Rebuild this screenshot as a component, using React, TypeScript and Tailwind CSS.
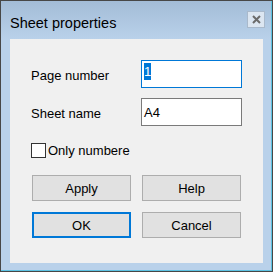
const font = { fontFamily: '"Liberation Sans", Arial, sans-serif' };

function Button({ label, primary }: { label: string; primary?: boolean }) {
  return (
    <div
      className={
        "w-[99px] h-[26px] flex items-center justify-center bg-[#e1e1e1] text-[13px] leading-[15px] text-black " +
        (primary ? "border-2 border-[#0078d7]" : "border border-[#adadad]")
      }
    >
      {label}
    </div>
  );
}

export default function App() {
  return (
    <div className="w-[274px] h-[273px] bg-white" style={font}>
      <div className="w-[273px] h-[272px] border border-[#474747] flex">
        <div className="flex-1 flex flex-col border-r border-b border-[#5cc2e2] bg-[#b9d1ea]">
          {/* title bar */}
          <div className="h-[38px] flex items-start bg-gradient-to-b from-[#a3bcd7] to-[#b9d1ea]">
            <span className="ml-[9px] mt-[14px] text-[14.5px] leading-[17px] text-black">
              Sheet properties
            </span>
            <div className="ml-auto mr-[6px] mt-[10px] w-[18px] h-[17px] flex items-center justify-center bg-[#dce6f1] border border-[#a9b9cb]">
              <svg width="9" height="9" viewBox="0 0 9 9">
                <path d="M1 1 L8 8 M8 1 L1 8" stroke="#6b6b6b" strokeWidth="2" />
              </svg>
            </div>
          </div>

          {/* client area */}
          <div className="ml-[9px] w-[253px] h-[224px] bg-[#f0f0f0] pl-[21px] pt-[21px] flex flex-col text-[13px] leading-[15px] text-black">
            <div className="flex items-center">
              <span className="w-[110px] pt-[2px]">Page number</span>
              <div className="w-[101px] h-[28px] border border-[#0078d7] bg-white pl-[2px] pt-[2px]">
                <span className="inline-block h-[17px] leading-[17px] px-[0px] bg-[#0078d7] text-white">1</span>
              </div>
            </div>
            <div className="flex items-center mt-[10px]">
              <span className="w-[110px] pt-[2px]">Sheet name</span>
              <div className="w-[101px] h-[28px] border border-[#7a7a7a] bg-white pl-[2px] flex items-center">
                A4
              </div>
            </div>
            <div className="flex items-center mt-[16px]">
              <div className="w-[15px] h-[15px] border border-[#333333] bg-white" />
              <span className="ml-[2px] pt-[1px]">Only numbere</span>
            </div>
            <div className="flex gap-[11px] mt-[17px] ml-[1px]">
              <Button label="Apply" />
              <Button label="Help" />
            </div>
            <div className="flex gap-[11px] mt-[11px] ml-[1px]">
              <Button label="OK" primary />
              <Button label="Cancel" />
            </div>
          </div>
        </div>
      </div>
    </div>
  );
}
